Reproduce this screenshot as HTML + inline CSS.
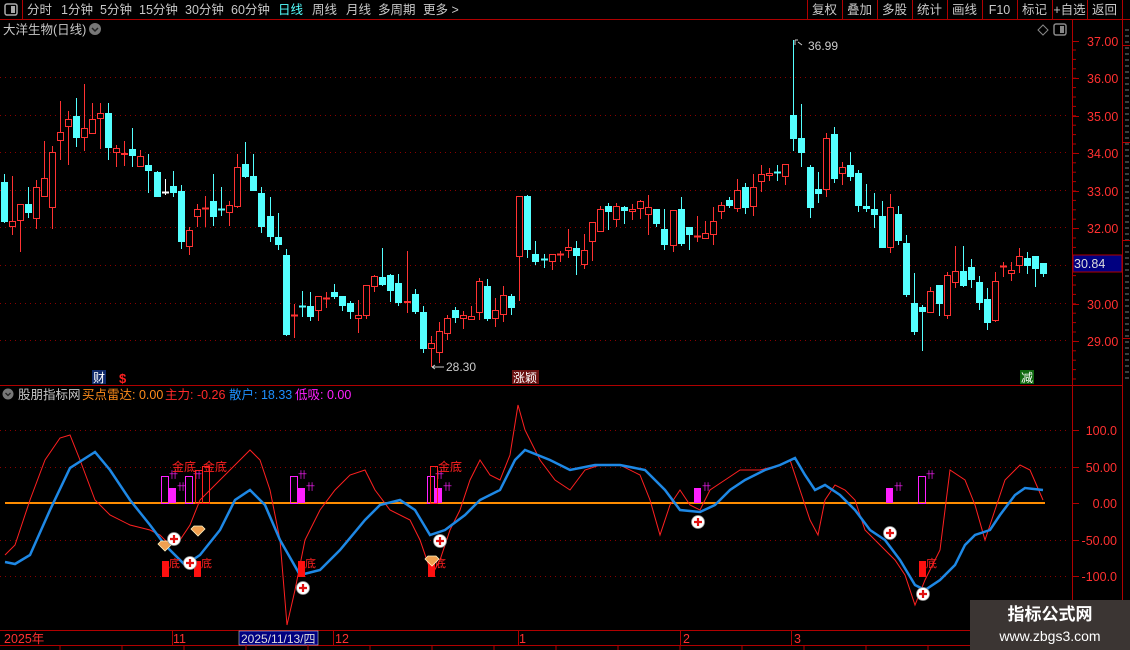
<!DOCTYPE html>
<html><head><meta charset="utf-8"><style>
html,body{margin:0;padding:0;background:#000;width:1130px;height:650px;overflow:hidden;font-family:"Liberation Sans","Noto Sans CJK SC",sans-serif;}
svg{display:block}
</style></head><body>
<svg id="s" width="1130" height="650" xmlns="http://www.w3.org/2000/svg" font-family="Liberation Sans, Noto Sans CJK SC, sans-serif">
<rect width="1130" height="650" fill="#000"/>
<!-- top bar -->
<line x1="0" y1="19.5" x2="1130" y2="19.5" stroke="#b00000"/>
<line x1="22.5" y1="0" x2="22.5" y2="19" stroke="#b00000"/>
<rect x="5" y="4" width="12" height="11" rx="2" fill="none" stroke="#aaa" stroke-width="1.5"/>
<rect x="11" y="6" width="4" height="7" fill="#aaa"/>
<g fill="#c8c8c8" font-size="12.5">
<text x="27" y="14">分时</text><text x="61" y="14">1分钟</text><text x="100" y="14">5分钟</text><text x="139" y="14">15分钟</text><text x="185" y="14">30分钟</text><text x="231" y="14">60分钟</text>
<text x="278" y="14" fill="#54ffff">日线</text><text x="312" y="14">周线</text><text x="346" y="14">月线</text><text x="378" y="14">多周期</text><text x="423" y="14">更多 &gt;</text>
</g>
<g id="btns"></g>
<!-- title -->
<text x="3" y="34" fill="#c8c8c8" font-size="12.5">大洋生物(日线)</text>
<circle cx="95" cy="29" r="6" fill="#777"/><path d="M92 28l3 3 3-3" stroke="#222" stroke-width="1.5" fill="none"/>
<path d="M1043 25l5 5-5 5-5-5z" fill="none" stroke="#888"/>
<rect x="1054" y="24" width="12" height="11" rx="2" fill="none" stroke="#888" stroke-width="1.5"/><rect x="1060" y="26" width="4" height="7" fill="#888"/>
<!-- axis lines -->
<line x1="1072.5" y1="20" x2="1072.5" y2="630" stroke="#b00000"/>
<line x1="1122.5" y1="20" x2="1122.5" y2="630" stroke="#b00000"/>
<line x1="0" y1="385.5" x2="1122" y2="385.5" stroke="#b00000"/>
<line x1="0" y1="630.5" x2="1130" y2="630.5" stroke="#b00000"/>
<line x1="0" y1="645.5" x2="1130" y2="645.5" stroke="#b00000"/>
<g id="grid"></g>
<g id="cand"></g>
<g id="ind"></g>
<!-- price box -->
<rect x="1073" y="255" width="49" height="17" fill="#000080" stroke="#b00000"/>
<text x="1074" y="268" fill="#ddd" font-size="12.5">30.84</text>
<!-- high/low labels -->
<path d="M795 40h3M795 40v5M798 42l4 3" stroke="#ccc" fill="none"/>
<text x="808" y="50" fill="#ccc" font-size="12">36.99</text>
<path d="M432 367h12M432 367l3-2M432 367l3 2" stroke="#ccc" fill="none"/>
<text x="446" y="371" fill="#ccc" font-size="12">28.30</text>
<!-- event labels -->
<rect x="92" y="370" width="14" height="14" fill="#102a6a"/><text x="93" y="382" fill="#fff" font-size="12">财</text>
<text x="119" y="383" fill="#ff2020" font-size="13" font-weight="bold">$</text>
<rect x="512" y="370" width="27" height="14" fill="#6a1010"/><text x="513" y="382" fill="#fff" font-size="12">涨颖</text>
<rect x="1020" y="370" width="14" height="14" fill="#106a10"/><text x="1021" y="382" fill="#fff" font-size="12">减</text>
<!-- indicator title -->
<circle cx="8" cy="394" r="5.5" fill="#777"/><path d="M5.5 393l2.5 2.5 2.5-2.5" stroke="#222" stroke-width="1.3" fill="none"/>
<g font-size="12.5">
<text x="18" y="399" fill="#c8c8c8">股朋指标网</text>
<text x="82" y="399" fill="#ff8c1a">买点雷达: 0.00</text>
<text x="165" y="399" fill="#ff2a2a">主力: -0.26</text>
<text x="229" y="399" fill="#1e90ff">散户: 18.33</text>
<text x="295" y="399" fill="#ff20ff">低吸: 0.00</text>
</g>
<!-- bottom axis -->
<g fill="#ff3030" font-size="12.5">
<text x="4" y="643">2025年</text><text x="173" y="643">11</text><text x="335" y="643">12</text><text x="519" y="643">1</text><text x="683" y="643">2</text><text x="794" y="643">3</text>
</g>
<g stroke="#b00000"><line x1="172.5" y1="630" x2="172.5" y2="645"/><line x1="333.5" y1="630" x2="333.5" y2="645"/><line x1="518.5" y1="630" x2="518.5" y2="645"/><line x1="680.5" y1="630" x2="680.5" y2="645"/><line x1="791.5" y1="630" x2="791.5" y2="645"/></g>
<rect x="239" y="631" width="79" height="14" fill="#000080" stroke="#ccc" stroke-width="0.6"/>
<text x="241" y="643" fill="#ddd" font-size="12">2025/11/13/四</text>
<g id="ticks"></g>
<!-- watermark -->
<rect x="970" y="600" width="160" height="50" fill="#3b3533"/>
<text x="1050" y="620" fill="#fff" font-size="17" font-weight="bold" text-anchor="middle">指标公式网</text>
<text x="1050" y="641" fill="#fff" font-size="14" text-anchor="middle">www.zbgs3.com</text>
</svg>
<script>
const NS="http://www.w3.org/2000/svg";
function el(p,t,a,txt){const e=document.createElementNS(NS,t);for(const k in a)e.setAttribute(k,a[k]);if(txt!==undefined)e.textContent=txt;document.getElementById(p).appendChild(e);return e;}
// buttons
const bl=["复权","叠加","多股","统计","画线","F10","标记","+自选","返回"];
for(let i=0;i<=9;i++){el("btns","line",{x1:807.5+i*35,y1:0,x2:807.5+i*35,y2:19,stroke:"#b00000"});}
bl.forEach((b,i)=>el("btns","text",{x:824.5+i*35,y:14,fill:"#c8c8c8","font-size":"12.5","text-anchor":"middle"},b));
// grid main
[77,115,152,190,227,265,303,340].forEach(y=>el("grid","line",{x1:0,y1:y+.5,x2:1070,y2:y+.5,stroke:"#8a0000","stroke-dasharray":"1 4"}));
[430,467,540,576].forEach(y=>el("grid","line",{x1:0,y1:y+.5,x2:1070,y2:y+.5,stroke:"#8a0000","stroke-dasharray":"1 4"}));
// price labels
const pl=[[41,"37.00"],[78,"36.00"],[116,"35.00"],[153,"34.00"],[191,"33.00"],[228,"32.00"],[304,"30.00"],[341,"29.00"]];
pl.forEach(p=>{el("grid","text",{x:1087,y:p[0]+5,fill:"#ff3030","font-size":"12.5"},p[1]);el("grid","line",{x1:1073,y1:p[0]+.5,x2:1079,y2:p[0]+.5,stroke:"#b00000"});});
for(let y=50;y<380;y+=9.4){el("grid","line",{x1:1073,y1:y,x2:1076,y2:y,stroke:"#b00000"});}
const il=[[430,"100.0"],[467,"50.00"],[503,"0.00"],[540,"-50.00"],[576,"-100.0"]];
il.forEach(p=>{el("grid","text",{x:1117,y:p[0]+5,fill:"#ff3030","font-size":"12.5","text-anchor":"end"},p[1]);el("grid","line",{x1:1073,y1:p[0]+.5,x2:1079,y2:p[0]+.5,stroke:"#b00000"});});
// right strip marks
for(let y=30;y<380;y+=6){el("grid","line",{x1:1125,y1:y,x2:1129,y2:y,stroke:"#777"});}
[45,142,240,338].forEach(y=>el("grid","line",{x1:1122,y1:y+.5,x2:1130,y2:y+.5,stroke:"#b00000"}));
for(let x=60;x<1130;x+=62)el("ticks","line",{x1:x,y1:645,x2:x,y2:650,stroke:"#b00000"});
// candles [x,top,bot,wt,wb,c]
const C=[[4,182,222,174,223,'c'],[12,221,227,176,235,'r'],[20,204,221,204,252,'r'],[28,204,213,187,218,'c'],[36,187,219,180,229,'r'],[44,178,197,141,197,'r'],[52,152,208,146,229,'r'],[60,132,141,101,160,'r'],[68,119,127,111,165,'r'],[76,116,138,98,147,'c'],[84,128,138,84,151,'r'],[92,119,134,103,134,'r'],[100,113,119,103,149,'r'],[108,113,148,103,160,'c'],[116,148,153,145,167,'r'],[124,153,155,141,166,'r'],[132,149,156,128,167,'c'],[140,156,167,150,167,'r'],[148,165,171,154,193,'c'],[157,172,197,171,197,'c'],[165,192,192,179,195,'w'],[173,186,193,171,197,'c'],[181,191,242,185,249,'c'],[189,230,247,227,255,'r'],[197,209,217,204,227,'r'],[205,208,208,196,227,'r'],[213,201,217,174,226,'c'],[221,209,209,187,216,'c'],[229,205,213,201,226,'r'],[237,167,207,154,208,'r'],[245,164,177,142,178,'c'],[253,176,191,154,191,'c'],[261,193,227,187,233,'c'],[270,216,237,197,242,'c'],[278,237,245,213,250,'c'],[286,255,335,249,336,'c'],[294,315,315,304,338,'r'],[302,306,306,291,317,'c'],[310,306,317,292,321,'c'],[318,296,311,296,321,'r'],[326,298,298,292,308,'r'],[334,292,297,284,299,'c'],[342,296,306,296,311,'c'],[350,303,312,301,319,'c'],[358,315,319,300,333,'r'],
[366,285,316,285,319,'r'],[374,276,287,275,292,'r'],[382,277,285,248,286,'c'],[390,275,291,274,302,'c'],[398,283,303,274,306,'c'],[407,301,303,251,313,'r'],[415,294,312,289,314,'c'],[423,312,349,306,353,'c'],[431,343,349,336,367,'r'],[439,331,353,322,363,'r'],[447,318,334,315,340,'r'],[455,310,318,307,323,'c'],[463,315,319,311,329,'r'],[471,316,320,306,320,'r'],[479,281,313,278,320,'r'],[487,286,319,279,321,'c'],[495,310,319,298,327,'r'],[503,295,315,286,322,'r'],[511,296,308,294,315,'c'],[519,196,257,196,301,'r'],[527,196,250,195,258,'c'],[535,254,262,241,265,'c'],[544,259,259,254,268,'c'],[552,254,262,254,270,'r'],[560,254,254,251,262,'r'],[568,247,251,229,258,'r'],[576,248,256,241,275,'c'],[584,250,265,234,269,'r'],[592,222,242,222,261,'r'],[600,209,232,206,232,'r'],[608,206,212,203,230,'c'],[616,206,220,203,227,'r'],[624,207,211,206,224,'c'],[632,209,212,204,220,'r'],[640,201,209,200,219,'r'],[648,207,215,195,235,'r'],[656,209,224,209,227,'c'],[664,229,245,209,250,'c'],[673,210,246,210,252,'r'],[681,209,244,197,246,'c'],[689,227,235,227,250,'c'],[697,236,236,216,242,'r'],[705,233,239,221,239,'r'],[713,221,235,207,245,'r'],
[721,205,212,202,219,'r'],[729,200,206,197,208,'c'],[737,190,209,179,212,'r'],[745,187,208,183,214,'c'],[753,187,207,174,216,'r'],[761,174,182,165,192,'r'],[769,173,176,168,181,'r'],[777,172,172,165,181,'c'],[785,164,177,164,185,'r'],[793,115,139,40,151,'c'],[801,138,153,104,167,'c'],[810,167,208,165,218,'c'],[818,189,194,172,203,'c'],[826,138,190,133,197,'r'],[834,134,179,127,183,'c'],[842,167,174,162,185,'r'],[850,165,177,152,181,'c'],[858,173,206,170,212,'c'],[866,206,209,184,212,'c'],[874,209,215,193,228,'c'],[882,216,248,201,248,'c'],[890,207,248,194,253,'r'],[898,214,241,206,245,'c'],[906,243,295,235,297,'c'],[914,303,332,273,335,'c'],[922,307,312,305,351,'c'],[930,291,313,287,313,'r'],[939,285,304,285,316,'c'],[947,275,316,272,319,'r'],[955,271,283,246,288,'r'],[963,271,286,246,287,'c'],[971,267,280,259,288,'c'],[979,282,303,276,310,'c'],[987,299,323,288,330,'c'],[995,281,321,272,322,'r'],[1003,266,266,262,277,'r'],[1011,270,274,262,281,'r'],[1019,256,266,248,273,'r'],[1027,258,266,252,274,'c'],[1035,256,269,256,287,'c'],[1043,263,274,263,277,'c']];
C.forEach(c=>{const [x,t,b,wt,wb,k]=c;const col=k=='r'?'#ff3232':(k=='w'?'#fff':'#54ffff');
el("cand","line",{x1:x+.5,y1:wt,x2:x+.5,y2:wb,stroke:col});
if(b-t<2){el("cand","rect",{x:x-3,y:t-0.5,width:7,height:2,fill:col});}
else if(k=='r'){el("cand","rect",{x:x-2.5,y:t+.5,width:6,height:b-t-1,fill:"#000",stroke:col});}
else el("cand","rect",{x:x-3,y:t,width:7,height:b-t,fill:col});});
// indicator
el("ind","line",{x1:5,y1:503,x2:1045,y2:503,stroke:"#ff8c00","stroke-width":2});
const red=[[5,555],[15,545],[30,500],[45,460],[60,438],[70,435],[80,460],[95,500],[110,515],[130,525],[150,530],[160,535],[170,545],[180,540],[190,525],[200,500],[210,490],[230,470],[240,460],[250,450],[260,460],[270,490],[280,540],[287,625],[295,590],[305,540],[320,510],[335,490],[350,475],[365,470],[375,490],[390,510],[410,520],[420,540],[432,575],[440,560],[450,530],[460,510],[470,480],[480,460],[490,475],[500,480],[510,455],[518,405],[525,430],[540,460],[555,480],[570,490],[585,470],[600,465],[620,465],[640,475],[650,500],[660,535],[670,505],[680,490],[690,505],[700,510],[710,490],[725,480],[740,470],[760,470],[780,465],[790,460],[800,490],[810,520],[818,535],[825,500],[835,485],[845,490],[855,500],[865,530],[880,545],[895,560],[905,575],[915,605],[925,580],[940,550],[950,470],[965,480],[975,505],[985,540],[995,510],[1005,480],[1020,465],[1030,470],[1043,500]];
const blue=[[5,562],[15,564],[30,555],[50,510],[70,468],[95,452],[110,470],[130,500],[150,525],[165,545],[185,565],[200,555],[220,530],[235,500],[250,490],[265,505],[280,540],[300,575],[320,570],[340,550],[365,520],[380,505],[400,500],[415,510],[430,535],[445,530],[465,515],[480,500],[500,490],[515,460],[525,450],[550,460],[570,470],[595,465],[620,465],[645,470],[665,490],[680,510],[700,512],[715,505],[730,490],[745,480],[765,470],[780,465],[795,458],[805,475],[815,490],[825,485],[840,495],[855,510],[870,530],[885,540],[900,560],[915,585],[925,590],[940,580],[955,565],[965,545],[975,535],[990,530],[1000,515],[1015,495],[1025,488],[1043,490]];
el("ind","polyline",{points:red.map(p=>p.join(",")).join(" "),fill:"none",stroke:"#ff2020","stroke-width":1});
el("ind","polyline",{points:blue.map(p=>p.join(",")).join(" "),fill:"none",stroke:"#1e88e5","stroke-width":2.5});
// magenta bars
[[161,476,'o'],[169,488,'f'],[185,476,'o'],[290,476,'o'],[298,488,'f'],[427,476,'o'],[435,488,'f'],[694,488,'f'],[886,488,'f'],[918,476,'o']].forEach(m=>{
if(m[2]=='o')el("ind","rect",{x:m[0]+.5,y:m[1]+.5,width:7,height:503-m[1],fill:"none",stroke:"#ff20ff"});
else el("ind","rect",{x:m[0],y:m[1],width:7,height:503-m[1],fill:"#ff20ff"});
el("ind","text",{x:m[0]+8,y:m[1]+2,fill:"#ff20ff","font-size":"9"},"卄");});
[[202,466],[195,470],[430,466]].forEach(m=>el("ind","rect",{x:m[0]+.5,y:m[1]+.5,width:7,height:503-m[1],fill:"none",stroke:"#ff2020"}));
[[172,471],[203,471],[438,471]].forEach(t=>el("ind","text",{x:t[0],y:t[1],fill:"#ff2020","font-size":"12"},"金底"));
// red 底 bars
[[162,561],[194,561],[298,561],[428,561],[919,561]].forEach(b=>{el("ind","rect",{x:b[0],y:b[1],width:7,height:16,fill:"#ff1010"});el("ind","text",{x:b[0]+7,y:b[1]+6,fill:"#ff2020","font-size":"11"},"底");});
// diamonds
[[165,547],[198,532],[432,562]].forEach(d=>el("ind","path",{d:`M${d[0]-7} ${d[1]-3}l3-3h8l3 3-7 7z`,fill:"#f0a050",stroke:"#fff2c0","stroke-width":.8}));
// plus circles
[[174,539],[190,563],[303,588],[440,541],[698,522],[890,533],[923,594]].forEach(p=>{el("ind","circle",{cx:p[0],cy:p[1],r:6.5,fill:"#fff",stroke:"#999","stroke-width":.8});el("ind","path",{d:`M${p[0]-4} ${p[1]}h8M${p[0]} ${p[1]-4}v8`,stroke:"#e01010","stroke-width":2.2});});
</script>
</body></html>
